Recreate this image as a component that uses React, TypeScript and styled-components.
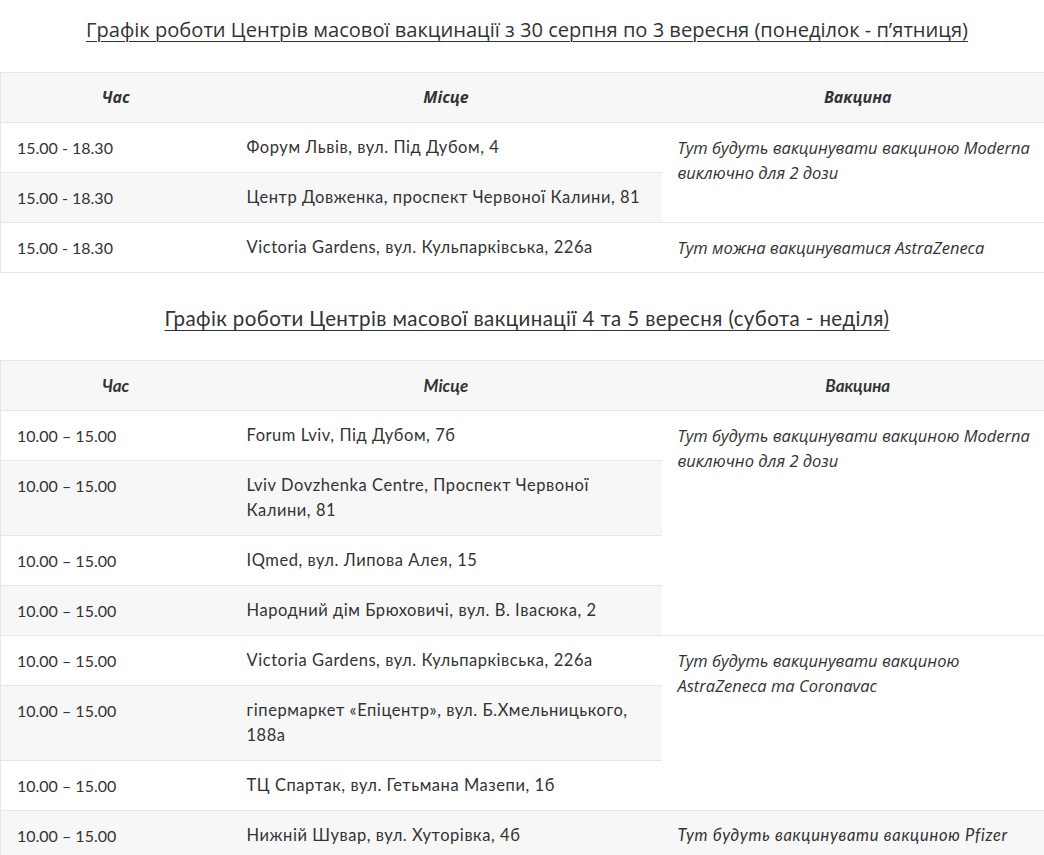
import React from 'react';
import styled, { createGlobalStyle } from 'styled-components';

type Face = 'wide' | 'narrow';

interface Row {
  time: string;
  place: string;
  vaccine?: { text: string; span: number; face: Face };
}

interface Schedule {
  title: string;
  titleFace: Face;
  headFace: Face;
  rows: Row[];
}

const GlobalStyle = createGlobalStyle`
  html, body {
    margin: 0;
    padding: 0;
    background: #ffffff;
    overflow-x: hidden;
  }
`;

const wideFont = `'Open Sans', 'Noto Sans', sans-serif`;
const narrowFont = `Lato, 'Liberation Sans', sans-serif`;

const Page = styled.div`
  width: 1054px;
  color: #333333;
  font-family: ${narrowFont};
`;

const Title = styled.h3<{ $face: Face }>`
  margin: 0;
  padding: 16px 0 28px;
  text-align: center;
  font-weight: 400;
  line-height: 28px;
  font-family: ${p => (p.$face === 'wide' ? wideFont : narrowFont)};
  font-size: ${p => (p.$face === 'wide' ? '20.1px' : '20.5px')};
  letter-spacing: ${p => (p.$face === 'wide' ? '0' : '0.4px')};
  color: #333333;
  text-decoration: underline;
  text-underline-offset: 4px;
  text-decoration-thickness: 1px;
`;

const Spacer = styled.div`
  height: 15px;
`;

const Table = styled.table`
  width: 100%;
  border-collapse: collapse;
  table-layout: fixed;
  border: 1px solid #e6e6e6;
`;

const HeadCell = styled.th<{ $face: Face }>`
  background: #f7f7f7;
  padding: 12px 16px;
  line-height: 25px;
  font-size: ${p => (p.$face === 'wide' ? '16px' : '17px')};
  font-weight: 700;
  font-style: italic;
  text-align: center;
  color: #333333;
  font-family: ${p => (p.$face === 'wide' ? wideFont : narrowFont)};
  border-bottom: 1px solid #e6e6e6;
`;

const BodyRow = styled.tr<{ $shade: boolean }>`
  background: ${p => (p.$shade ? '#f7f7f7' : '#ffffff')};
  border-bottom: 1px solid #e6e6e6;
`;

const Cell = styled.td<{ $kind: 'time' | 'place' }>`
  padding: 12px 16px;
  line-height: 25px;
  font-size: ${p => (p.$kind === 'time' ? '16px' : '16.5px')};
  letter-spacing: ${p => (p.$kind === 'time' ? '0' : '0.55px')};
  vertical-align: top;
  color: #333333;
`;

const VaccineCell = styled.td<{ $face: Face }>`
  padding: 12px 16px;
  line-height: 25px;
  vertical-align: top;
  font-style: italic;
  color: #333333;
  font-family: ${p => (p.$face === 'wide' ? wideFont : narrowFont)};
  font-size: ${p => (p.$face === 'wide' ? '16.5px' : '16.5px')};
  letter-spacing: ${p => (p.$face === 'wide' ? '0' : '0.7px')};
  border-bottom: 1px solid #e6e6e6;
`;

const moderna = 'Тут будуть вакцинувати вакциною Moderna виключно для 2 дози';

const schedules: Schedule[] = [
  {
    title:
      'Графік роботи Центрів масової вакцинації з 30 серпня по 3 вересня (понеділок - п’ятниця)',
    titleFace: 'wide',
    headFace: 'wide',
    rows: [
      {
        time: '15.00 - 18.30',
        place: 'Форум Львів, вул. Під Дубом, 4',
        vaccine: { text: moderna, span: 2, face: 'wide' },
      },
      { time: '15.00 - 18.30', place: 'Центр Довженка, проспект Червоної Калини, 81' },
      {
        time: '15.00 - 18.30',
        place: 'Victoria Gardens, вул. Кульпарківська, 226а',
        vaccine: { text: 'Тут можна вакцинуватися AstraZeneca', span: 1, face: 'wide' },
      },
    ],
  },
  {
    title: 'Графік роботи Центрів масової вакцинації 4 та 5 вересня (субота - неділя)',
    titleFace: 'narrow',
    headFace: 'narrow',
    rows: [
      {
        time: '10.00 – 15.00',
        place: 'Forum Lviv, Під Дубом, 7б',
        vaccine: { text: moderna, span: 4, face: 'wide' },
      },
      { time: '10.00 – 15.00', place: 'Lviv Dovzhenka Centre, Проспект Червоної Калини, 81' },
      { time: '10.00 – 15.00', place: 'IQmed, вул. Липова Алея, 15' },
      { time: '10.00 – 15.00', place: 'Народний дім Брюховичі, вул. В. Івасюка, 2' },
      {
        time: '10.00 – 15.00',
        place: 'Victoria Gardens, вул. Кульпарківська, 226а',
        vaccine: {
          text: 'Тут будуть вакцинувати вакциною AstraZeneca та Coronavac',
          span: 3,
          face: 'wide',
        },
      },
      { time: '10.00 – 15.00', place: 'гіпермаркет «Епіцентр», вул. Б.Хмельницького, 188а' },
      { time: '10.00 – 15.00', place: 'ТЦ Спартак, вул. Гетьмана Мазепи, 1б' },
      {
        time: '10.00 – 15.00',
        place: 'Нижній Шувар, вул. Хуторівка, 4б',
        vaccine: { text: 'Тут будуть вакцинувати вакциною Pfizer', span: 1, face: 'narrow' },
      },
    ],
  },
];

const ScheduleTable: React.FC<{ data: Schedule }> = ({ data }) => (
  <>
    <Title $face={data.titleFace}>{data.title}</Title>
    <Table>
      <colgroup>
        <col style={{ width: 230 }} />
        <col style={{ width: 431 }} />
        <col style={{ width: 393 }} />
      </colgroup>
      <thead>
        <tr>
          <HeadCell $face={data.headFace}>Час</HeadCell>
          <HeadCell $face={data.headFace}>Місце</HeadCell>
          <HeadCell $face={data.headFace}>Вакцина</HeadCell>
        </tr>
      </thead>
      <tbody>
        {data.rows.map((row, i) => (
          <BodyRow key={i} $shade={i % 2 === 1}>
            <Cell $kind="time">{row.time}</Cell>
            <Cell $kind="place">{row.place}</Cell>
            {row.vaccine && (
              <VaccineCell rowSpan={row.vaccine.span} $face={row.vaccine.face}>
                {row.vaccine.text}
              </VaccineCell>
            )}
          </BodyRow>
        ))}
      </tbody>
    </Table>
  </>
);

const App: React.FC = () => (
  <Page>
    <GlobalStyle />
    <ScheduleTable data={schedules[0]} />
    <Spacer />
    <ScheduleTable data={schedules[1]} />
  </Page>
);

export default App;
